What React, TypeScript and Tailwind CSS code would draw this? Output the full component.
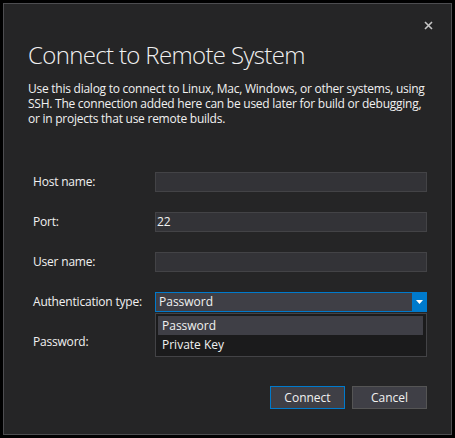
import { useState } from "react";

const FIELDS = ["Host name:", "Port:", "User name:", "Authentication type:", "Password:"];

export default function App() {
  const [auth] = useState("Password");
  const font = { fontFamily: '"Open Sans", "Noto Sans", sans-serif' };

  return (
    <div className="w-[455px] h-[438px] bg-black p-[3px]" style={font}>
      <div className="relative h-full border border-[#4d4d50] bg-[#252526] text-[#f1f1f1] flex flex-col pl-[24px] pr-[24px]">
        <button className="absolute right-[16px] top-[14px] w-[14px] h-[14px] flex items-center justify-center text-[#c6c6c6]">
          <svg width="9" height="9" viewBox="0 0 9 9">
            <path d="M1 1L8 8M8 1L1 8" stroke="currentColor" strokeWidth="1.6" />
          </svg>
        </button>

        <h1 className="mt-[35px] text-[24px] leading-[32px] font-light tracking-[-0.65px]">
          Connect to Remote System
        </h1>
        <p className="mt-[10px] text-[12px] leading-[15px] tracking-[-0.25px]">
          Use this dialog to connect to Linux, Mac, Windows, or other systems, using SSH. The connection added here can be used later for build or debugging, or in projects that use remote builds.
        </p>

        <div className="mt-[46px] ml-[5px] grid grid-cols-[122px_1fr] gap-y-[20px] text-[12px]">
          {FIELDS.map((f, i) => (
            <div key={f} className="contents">
              <label className="h-[20px] leading-[20px] tracking-[-0.2px]">{f}</label>
              {i === 3 ? (
                <div className="relative h-[20px]">
                  <div className="h-full flex border border-[#007acc] bg-[#3f3f46]">
                    <span className="flex-1 leading-[18px] pl-[3px]">{auth}</span>
                    <span className="w-[14px] bg-[#007acc] flex items-center justify-center">
                      <svg width="7" height="4" viewBox="0 0 7 4">
                        <path d="M0 0H7L3.5 4Z" fill="#ffffff" />
                      </svg>
                    </span>
                  </div>
                  <div className="absolute z-10 left-0 right-0 top-[21px] border border-[#434346] bg-[#1b1b1c] p-[2px] pr-[3px]">
                    <div className="h-[19px] leading-[19px] pl-[4px] bg-[#3f3f46]">Password</div>
                    <div className="h-[19px] leading-[19px] pl-[4px]">Private Key</div>
                  </div>
                </div>
              ) : (
                <div className="h-[20px] border border-[#434346] bg-[#333337] leading-[18px] pl-[1px]">
                  {i === 1 ? "22" : ""}
                </div>
              )}
            </div>
          ))}
        </div>

        <div className="mt-[34px] flex justify-end gap-[7px] text-[12px]">
          <button className="w-[75px] h-[23px] border border-[#007acc] bg-[#3f3f46] text-[#f1f1f1]">
            Connect
          </button>
          <button className="w-[75px] h-[23px] border border-[#555555] bg-[#3f3f46] text-[#f1f1f1]">
            Cancel
          </button>
        </div>
      </div>
    </div>
  );
}
